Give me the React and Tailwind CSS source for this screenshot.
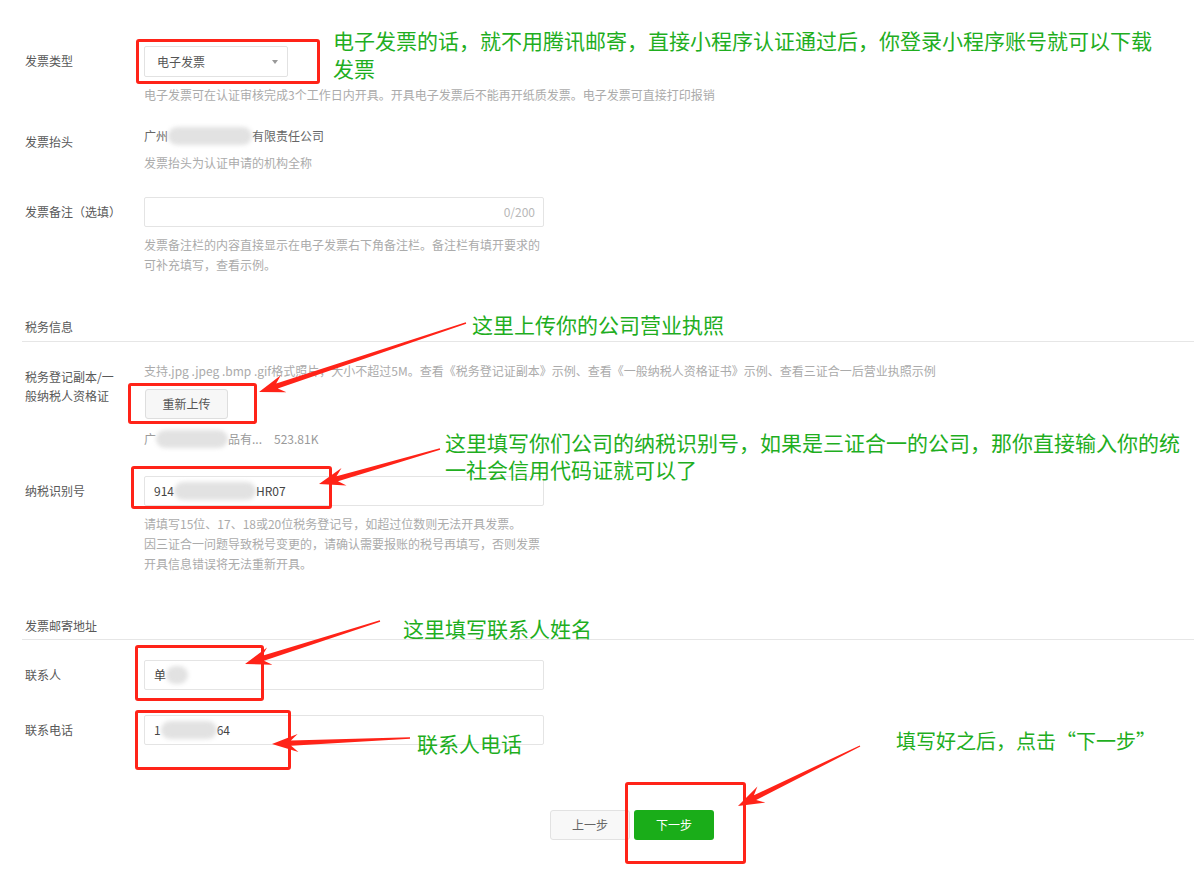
// ─── Invoice form (annotated) ────────────────────────────────────
const FONT = '"Noto Sans CJK SC", "Noto Sans", "Liberation Sans", sans-serif';

// red arrows drawn over the page: [tailX, tailY, tipX, tipY]
const ARROWS = [
  [466, 323, 259, 392],
  [440, 449, 319, 484],
  [380, 621, 245, 664],
  [410, 738, 272, 744],
  [860, 746, 738, 806],
];

function arrowPoints([x1, y1, x2, y2]) {
  const dx = x2 - x1, dy = y2 - y1;
  const len = Math.hypot(dx, dy);
  const ux = dx / len, uy = dy / len;
  const nx = -uy, ny = ux;
  const head = 26, half = 9, neckBack = 19, neckW = 2.6, tailW = 0.7;
  const bx = x2 - ux * head, by = y2 - uy * head;
  const kx = x2 - ux * neckBack, ky = y2 - uy * neckBack;
  const p = [
    [x1 + nx * tailW, y1 + ny * tailW],
    [kx + nx * neckW, ky + ny * neckW],
    [bx + nx * half, by + ny * half],
    [x2, y2],
    [bx - nx * half, by - ny * half],
    [kx - nx * neckW, ky - ny * neckW],
    [x1 - nx * tailW, y1 - ny * tailW],
  ];
  return p.map(q => q[0].toFixed(1) + ',' + q[1].toFixed(1)).join(' ');
}

function Blur({ w }) {
  return <span className="inline-block h-[18px] align-middle rounded-full bg-[#e2e2e2] blur-[2px]" style={{ width: w }} />;
}

function Row({ label, labelClass = 'leading-[30px]', children, className = '' }) {
  return (
    <div className={`flex ${className}`}>
      <div className={`w-[122px] pl-[3px] shrink-0 text-[#585858] ${labelClass}`}>{label}</div>
      <div className="flex-1">{children}</div>
    </div>
  );
}

function Hint({ children, className = '' }) {
  return <div className={`text-[#ababab] leading-[20px] ${className}`}>{children}</div>;
}

function Input({ children, right }) {
  return (
    <div className="w-[400px] h-[30px] border border-[#e4e4e4] rounded-[2px] flex items-center pl-[9px] pr-[8px] text-[#444]">
      <div className="flex-1 flex items-center">{children}</div>
      {right && <span className="text-[#b8b8b8]">{right}</span>}
    </div>
  );
}

function Section({ title, className = '' }) {
  return (
    <div className={`border-b border-[#e6e6e6] pl-[3px] leading-[20px] text-[#585858] ${className}`}>{title}</div>
  );
}

const Box = ({ l, t, w, h }) => (
  <div className="absolute border-[3px] border-[#ff2318] rounded-[3px]" style={{ left: l, top: t, width: w, height: h }} />
);

const Note = ({ l, t, lh = 28, size = 21, children }) => (
  <div className="absolute text-[#1fae1f] whitespace-nowrap" style={{ left: l, top: t, lineHeight: lh + 'px', fontSize: size }}>{children}</div>
);

export default function App() {
  return (
    <div className="relative w-[1194px] h-[874px] bg-white overflow-hidden text-[12px]" style={{ fontFamily: FONT }}>
      <div className="pl-[22px] pt-[46px]">
        {/* 发票类型 */}
        <Row label="发票类型">
          <div className="w-[144px] h-[31px] border border-[#e2e2e2] rounded-[2px] flex items-center justify-between pl-[12px] pr-[9px] text-[#555]">
            <span>电子发票</span>
            <span className="w-0 h-0 border-l-[3px] border-r-[3px] border-t-[4px] border-l-transparent border-r-transparent border-t-[#999]" />
          </div>
          <Hint className="mt-[8px] whitespace-nowrap">电子发票可在认证审核完成3个工作日内开具。开具电子发票后不能再开纸质发票。电子发票可直接打印报销</Hint>
        </Row>

        {/* 发票抬头 */}
        <Row label="发票抬头" labelClass="pt-[6px] leading-[20px]" className="mt-[21px]">
          <div className="leading-[20px] text-[#666] flex items-center">
            <span>广州</span><Blur w={84} /><span>有限责任公司</span>
          </div>
          <Hint className="mt-[7px]">发票抬头为认证申请的机构全称</Hint>
        </Row>

        {/* 发票备注 */}
        <Row label="发票备注（选填）" className="mt-[24px]">
          <Input right="0/200" />
          <Hint className="mt-[8px]">发票备注栏的内容直接显示在电子发票右下角备注栏。备注栏有填开要求的<br />可补充填写，查看示例。</Hint>
        </Row>

        <Section title="税务信息" className="mt-[42px] pb-[4px]" />

        {/* 税务登记副本 */}
        <Row label={<>税务登记副本/一<br />般纳税人资格证</>} labelClass="pt-[6px] leading-[19px]" className="mt-[19px]">
          <Hint className="whitespace-nowrap">支持.jpg .jpeg .bmp .gif格式照片，大小不超过5M。查看《税务登记证副本》示例、查看《一般纳税人资格证书》示例、查看三证合一后营业执照示例</Hint>
          <button className="mt-[8px] ml-px w-[83px] h-[30px] bg-[#f7f7f7] border border-[#dedede] rounded-[3px] text-[#555]">重新上传</button>
          <div className="mt-[10px] leading-[20px] text-[#9a9a9a] flex items-center">
            <span>广</span><Blur w={72} /><span>品有...</span><span className="ml-[12px]">523.81K</span>
          </div>
        </Row>

        {/* 纳税识别号 */}
        <Row label="纳税识别号" className="mt-[27px]">
          <Input><span>914</span><Blur w={82} /><span>HR07</span></Input>
          <Hint className="mt-[8px]">
            请填写15位、17、18或20位税务登记号，如超过位数则无法开具发票。<br />
            因三证合一问题导致税号变更的，请确认需要报账的税号再填写，否则发票<br />
            开具信息错误将无法重新开具。
          </Hint>
        </Row>

        <Section title="发票邮寄地址" className="mt-[42px] pb-[3px]" />

        <Row label="联系人" className="mt-[20px]">
          <Input><span>单</span><Blur w={22} /></Input>
        </Row>
        <Row label="联系电话" className="mt-[25px]">
          <Input><span>1</span><Blur w={56} /><span>64</span></Input>
        </Row>

        <div className="mt-[65px] ml-[528px] flex gap-[4px]">
          <button className="w-[80px] h-[30px] bg-[#f8f8f8] border border-[#e2e2e2] rounded-[3px] text-[#666]">上一步</button>
          <button className="w-[80px] h-[30px] bg-[#1aad19] rounded-[3px] text-white">下一步</button>
        </div>
      </div>

      {/* annotations */}
      <Box l={136} t={39} w={184} h={45} />
      <Box l={128} t={383} w={129} h={41} />
      <Box l={131} t={466} w={201} h={43} />
      <Box l={135} t={645} w={129} h={56} />
      <Box l={135} t={710} w={156} h={60} />
      <Box l={625} t={782} w={121} h={82} />

      <Note l={333} t={26}>电子发票的话，就不用腾讯邮寄，直接小程序认证通过后，你登录小程序账号就可以下载<br />发票</Note>
      <Note l={472} t={310}>这里上传你的公司营业执照</Note>
      <Note l={445} t={429} lh={27}>这里填写你们公司的纳税识别号，如果是三证合一的公司，那你直接输入你的统<br />一社会信用代码证就可以了</Note>
      <Note l={403} t={614}>这里填写联系人姓名</Note>
      <Note l={417} t={729}>联系人电话</Note>
      <Note l={896} t={727} size={20}>填写好之后，点击“下一步”</Note>

      <svg className="absolute inset-0 pointer-events-none" width="1194" height="874">
        {ARROWS.map((a, i) => <polygon key={i} points={arrowPoints(a)} fill="#ff2318" />)}
      </svg>
    </div>
  );
}
